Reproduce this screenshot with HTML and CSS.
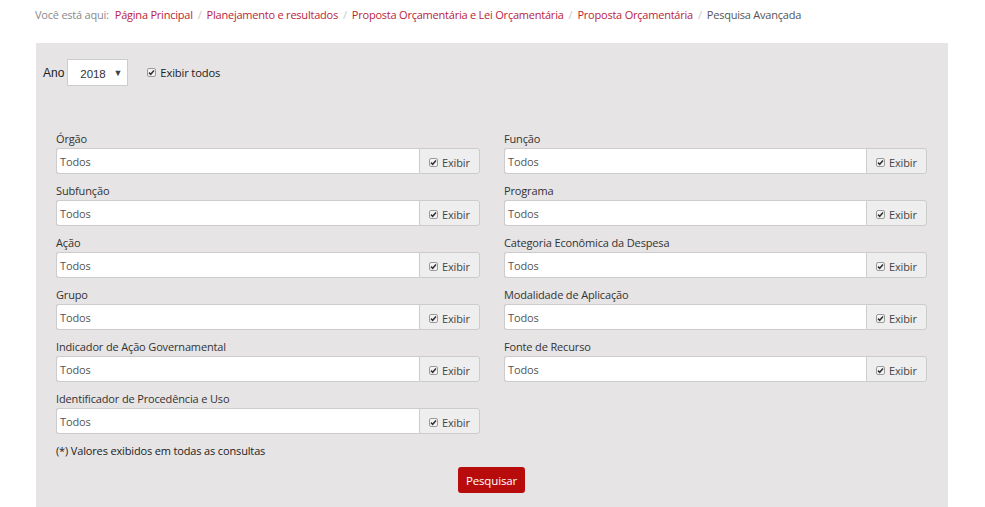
FILE: index.html
```html
<!DOCTYPE html>
<html lang="pt-BR">
<head>
<meta charset="utf-8">
<title>Pesquisa Avançada</title>
<link rel="stylesheet" href="styles.css">
</head>
<body>
<nav class="breadcrumb">
  <span class="here">Você está aqui:</span>
  <a href="#">Página Principal</a><span class="sep">/</span>
  <a href="#">Planejamento e resultados</a><span class="sep">/</span>
  <a href="#">Proposta Orçamentária e Lei Orçamentária</a><span class="sep">/</span>
  <a href="#">Proposta Orçamentária</a><span class="sep">/</span>
  <span class="current">Pesquisa Avançada</span>
</nav>
<main class="panel">
  <div class="top-row">
    <span class="ano-label">Ano</span>
    <div class="select"><span>2018</span><span class="arrow">▼</span></div>
    <label class="check-all"><svg class="cb" viewBox="0 0 9 9" width="9" height="9"><rect x="0.5" y="0.5" width="8" height="8" rx="1.5" fill="#f4f4f4" stroke="#9a9a9a"/><path d="M2 4.6 L3.7 6.3 L7 2.4" fill="none" stroke="#333" stroke-width="1.5"/></svg>Exibir todos</label>
  </div>
  <div class="grid">
    <div class="col">
      <div class="field"><div class="label">Órgão</div><div class="group"><div class="input">Todos</div><div class="addon"><svg class="cb" viewBox="0 0 9 9" width="9" height="9"><rect x="0.5" y="0.5" width="8" height="8" rx="1.5" fill="#f4f4f4" stroke="#9a9a9a"/><path d="M2 4.6 L3.7 6.3 L7 2.4" fill="none" stroke="#333" stroke-width="1.5"/></svg>Exibir</div></div></div>
      <div class="field"><div class="label">Subfunção</div><div class="group"><div class="input">Todos</div><div class="addon"><svg class="cb" viewBox="0 0 9 9" width="9" height="9"><rect x="0.5" y="0.5" width="8" height="8" rx="1.5" fill="#f4f4f4" stroke="#9a9a9a"/><path d="M2 4.6 L3.7 6.3 L7 2.4" fill="none" stroke="#333" stroke-width="1.5"/></svg>Exibir</div></div></div>
      <div class="field"><div class="label">Ação</div><div class="group"><div class="input">Todos</div><div class="addon"><svg class="cb" viewBox="0 0 9 9" width="9" height="9"><rect x="0.5" y="0.5" width="8" height="8" rx="1.5" fill="#f4f4f4" stroke="#9a9a9a"/><path d="M2 4.6 L3.7 6.3 L7 2.4" fill="none" stroke="#333" stroke-width="1.5"/></svg>Exibir</div></div></div>
      <div class="field"><div class="label">Grupo</div><div class="group"><div class="input">Todos</div><div class="addon"><svg class="cb" viewBox="0 0 9 9" width="9" height="9"><rect x="0.5" y="0.5" width="8" height="8" rx="1.5" fill="#f4f4f4" stroke="#9a9a9a"/><path d="M2 4.6 L3.7 6.3 L7 2.4" fill="none" stroke="#333" stroke-width="1.5"/></svg>Exibir</div></div></div>
      <div class="field"><div class="label">Indicador de Ação Governamental</div><div class="group"><div class="input">Todos</div><div class="addon"><svg class="cb" viewBox="0 0 9 9" width="9" height="9"><rect x="0.5" y="0.5" width="8" height="8" rx="1.5" fill="#f4f4f4" stroke="#9a9a9a"/><path d="M2 4.6 L3.7 6.3 L7 2.4" fill="none" stroke="#333" stroke-width="1.5"/></svg>Exibir</div></div></div>
      <div class="field"><div class="label">Identificador de Procedência e Uso</div><div class="group"><div class="input">Todos</div><div class="addon"><svg class="cb" viewBox="0 0 9 9" width="9" height="9"><rect x="0.5" y="0.5" width="8" height="8" rx="1.5" fill="#f4f4f4" stroke="#9a9a9a"/><path d="M2 4.6 L3.7 6.3 L7 2.4" fill="none" stroke="#333" stroke-width="1.5"/></svg>Exibir</div></div></div>
    </div>
    <div class="col">
      <div class="field"><div class="label">Função</div><div class="group"><div class="input">Todos</div><div class="addon"><svg class="cb" viewBox="0 0 9 9" width="9" height="9"><rect x="0.5" y="0.5" width="8" height="8" rx="1.5" fill="#f4f4f4" stroke="#9a9a9a"/><path d="M2 4.6 L3.7 6.3 L7 2.4" fill="none" stroke="#333" stroke-width="1.5"/></svg>Exibir</div></div></div>
      <div class="field"><div class="label">Programa</div><div class="group"><div class="input">Todos</div><div class="addon"><svg class="cb" viewBox="0 0 9 9" width="9" height="9"><rect x="0.5" y="0.5" width="8" height="8" rx="1.5" fill="#f4f4f4" stroke="#9a9a9a"/><path d="M2 4.6 L3.7 6.3 L7 2.4" fill="none" stroke="#333" stroke-width="1.5"/></svg>Exibir</div></div></div>
      <div class="field"><div class="label">Categoria Econômica da Despesa</div><div class="group"><div class="input">Todos</div><div class="addon"><svg class="cb" viewBox="0 0 9 9" width="9" height="9"><rect x="0.5" y="0.5" width="8" height="8" rx="1.5" fill="#f4f4f4" stroke="#9a9a9a"/><path d="M2 4.6 L3.7 6.3 L7 2.4" fill="none" stroke="#333" stroke-width="1.5"/></svg>Exibir</div></div></div>
      <div class="field"><div class="label">Modalidade de Aplicação</div><div class="group"><div class="input">Todos</div><div class="addon"><svg class="cb" viewBox="0 0 9 9" width="9" height="9"><rect x="0.5" y="0.5" width="8" height="8" rx="1.5" fill="#f4f4f4" stroke="#9a9a9a"/><path d="M2 4.6 L3.7 6.3 L7 2.4" fill="none" stroke="#333" stroke-width="1.5"/></svg>Exibir</div></div></div>
      <div class="field"><div class="label">Fonte de Recurso</div><div class="group"><div class="input">Todos</div><div class="addon"><svg class="cb" viewBox="0 0 9 9" width="9" height="9"><rect x="0.5" y="0.5" width="8" height="8" rx="1.5" fill="#f4f4f4" stroke="#9a9a9a"/><path d="M2 4.6 L3.7 6.3 L7 2.4" fill="none" stroke="#333" stroke-width="1.5"/></svg>Exibir</div></div></div>
    </div>
  </div>
  <p class="note">(*) Valores exibidos em todas as consultas</p>
  <div class="actions"><button class="btn" type="button">Pesquisar</button></div>
</main>
</body>
</html>
```

FILE: styles.css
```css
* { box-sizing: border-box; }
body {
  margin: 0;
  font-family: "Open Sans", "Noto Sans", sans-serif;
  font-size: 11px;
  letter-spacing: -0.15px;
  color: #333;
  background: #fff;
}
.breadcrumb {
  display: flex;
  align-items: center;
  height: 28px;
  padding-left: 35px;
  font-size: 11px;
  letter-spacing: -0.22px;
  white-space: nowrap;
}
.breadcrumb .here { color: #8a8a8a; margin-right: 6px; }
.breadcrumb a { color: #b9243a; text-decoration: none; }
.breadcrumb .sep { color: #c8c8c8; margin: 0 5px; }
.breadcrumb .current { color: #555; }
.panel {
  margin: 15px 0 0 36px;
  width: 912px;
  background: #e6e4e5;
  padding: 16px 21px 14px 20px;
}
.top-row {
  display: flex;
  align-items: center;
  margin-left: -13px;
  height: 27px;
}
.ano-label {
  font-family: "Liberation Sans", Arial, sans-serif;
  font-size: 12px;
  letter-spacing: 0;
  color: #222;
  margin-right: 4px;
}
.select {
  width: 61px;
  height: 27px;
  margin-left: -1px;
  background: #fff;
  border: 1px solid #ccc;
  display: flex;
  align-items: center;
  justify-content: space-between;
  padding: 2px 5px 0 12px;
  font-family: "Liberation Sans", Arial, sans-serif;
  font-size: 11.5px;
  letter-spacing: -0.1px;
  color: #333;
}
.select .arrow { font-size: 9px; color: #444; margin-top: -2px; }
.check-all {
  display: flex;
  align-items: center;
  margin-left: 19px;
  margin-top: -1px;
  color: #222;
  font-size: 11.2px;
}
.cb { margin-right: 4px; flex: none; }
.grid {
  display: grid;
  grid-template-columns: 424px 423px;
  column-gap: 24px;
  margin-top: 45px;
}
.field { height: 52px; }
.label {
  height: 16px;
  line-height: 16px;
  color: #333;
  margin-bottom: 1px;
  font-size: 11px;
}
.group {
  display: flex;
  height: 26px;
}
.input {
  flex: 1;
  background: #fff;
  border: 1px solid #ccc;
  border-right: none;
  border-radius: 3px 0 0 3px;
  padding: 0 3px;
  display: flex;
  align-items: center;
  color: #555;
}
.addon {
  width: 61px;
  background: #eee;
  border: 1px solid #ccc;
  border-radius: 0 3px 3px 0;
  display: flex;
  align-items: center;
  padding: 2px 0 0 9px;
  color: #444;
}
.note {
  margin: 0;
  height: 16px;
  line-height: 16px;
  color: #222;
  font-size: 11px;
}
.actions {
  display: flex;
  justify-content: center;
  margin-top: 8px;
}
.btn {
  width: 67px;
  height: 26px;
  background: #b80c0c;
  color: #fff;
  border: none;
  border-radius: 3px;
  font-family: inherit;
  font-size: 11.5px;
  letter-spacing: -0.15px;
  padding: 0;
}
```
